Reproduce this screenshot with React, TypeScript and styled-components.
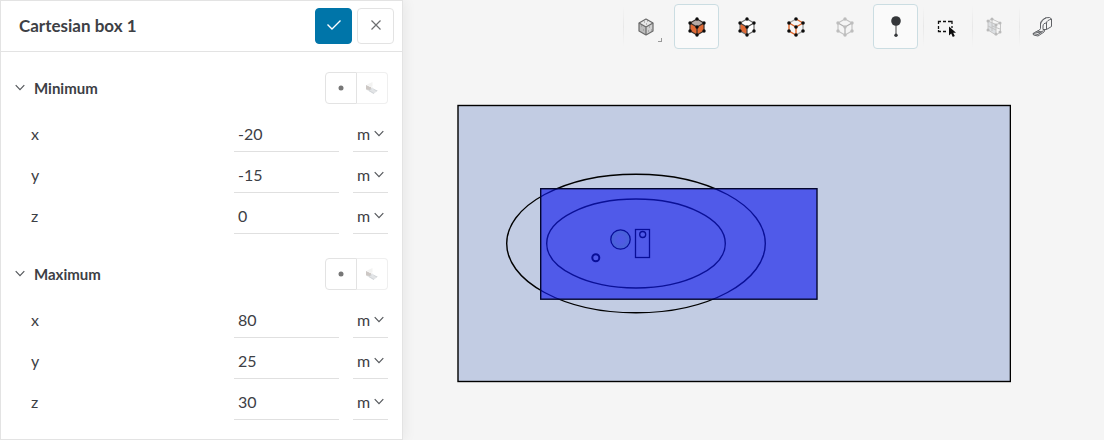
import React from "react";
import styled, { createGlobalStyle, css } from "styled-components";

const GlobalStyle = createGlobalStyle`
  *, *::before, *::after { box-sizing: border-box; }
  body {
    margin: 0;
    background: #f5f5f5;
    color: #3d4045;
    font-family: Lato, "Open Sans", sans-serif;
    font-size: 16px;
    line-height: 20px;
  }
  button, input, select { font: inherit; color: inherit; }
`;

const Page = styled.div`
  display: flex;
  align-items: stretch;
  min-height: 100vh;
`;

const Panel = styled.form`
  flex: 0 0 403px;
  background: #fff;
  border: 1px solid #e3e3e3;
  box-shadow: 2px 0 12px rgba(0, 0, 0, 0.06);
`;

const PanelHeader = styled.header`
  display: flex;
  align-items: center;
  gap: 5px;
  height: 51px;
  padding: 0 8px 0 18px;
  border-bottom: 1px solid #e3e3e3;
`;

const Title = styled.h1`
  flex: 1;
  margin: 0;
  font-size: 17px;
  font-weight: 700;
`;

const ActionButton = styled.button<{ $primary?: boolean }>`
  display: flex;
  align-items: center;
  justify-content: center;
  width: 37px;
  height: 36px;
  padding: 0 0 3px;
  border: 1px solid ${(p) => (p.$primary ? "#0075a9" : "#e3e3e3")};
  border-radius: 4px;
  background: ${(p) => (p.$primary ? "#0075a9" : "#fff")};
`;

const PanelBody = styled.div`
  display: flex;
  flex-direction: column;
  gap: 24px;
  padding: 20px 14px 18px;
`;

const Section = styled.section`
  display: flex;
  flex-direction: column;
  gap: 6px;
`;

const SectionHeader = styled.div`
  display: flex;
  align-items: center;
  height: 32px;
  margin-bottom: 7px;
`;

const Toggle = styled.button`
  display: flex;
  align-items: center;
  gap: 9px;
  padding: 0;
  border: 0;
  background: none;
  font-size: 15px;
  font-weight: 700;
`;

const Segmented = styled.div`
  display: flex;
  margin-left: auto;
`;

const Segment = styled.button<{ $muted?: boolean }>`
  display: flex;
  align-items: center;
  justify-content: center;
  width: 32px;
  height: 32px;
  padding: 0;
  border: 1px solid #e3e3e3;
  border-radius: 4px 0 0 4px;
  background: #fff;
  ${(p) =>
    p.$muted &&
    css`
      width: 31px;
      border-color: #efefef;
      border-left: 0;
      border-radius: 0 4px 4px 0;
    `}
`;

const FieldRow = styled.div`
  display: flex;
  align-items: stretch;
  gap: 14px;
  height: 35px;
  padding-left: 16px;
`;

const FieldLabel = styled.label`
  flex: 1;
  line-height: 34px;
`;

const NumberInput = styled.input`
  width: 105px;
  padding: 0 4px;
  border: 0;
  border-bottom: 1px solid #e0e0e0;
  border-radius: 0;
  background: transparent;
`;

const UnitBox = styled.div`
  display: flex;
  align-items: center;
  width: 35px;
  border-bottom: 1px solid #e0e0e0;
`;

const UnitSelect = styled.select`
  width: 35px;
  height: 34px;
  margin-right: -14px;
  padding: 0 0 0 4px;
  border: 0;
  background: transparent;
  appearance: none;
`;

const UnitArrow = styled.span`
  display: flex;
  pointer-events: none;
`;

const Viewer = styled.main`
  flex: 1;
  min-width: 0;
  display: flex;
  flex-direction: column;
`;

const Toolbar = styled.div`
  display: flex;
  justify-content: flex-end;
  gap: 5px;
  padding: 4px 40px 0 0;
`;

const ToolButton = styled.button<{ $active?: boolean; $divided?: boolean; $narrow?: boolean }>`
  position: relative;
  display: flex;
  align-items: center;
  justify-content: center;
  width: ${(p) => (p.$narrow ? 42 : 44)}px;
  height: 45px;
  padding: 0;
  border: 0;
  background: none;
  ${(p) =>
    p.$active &&
    css`
      width: 45px;
      margin: 0 1px;
      border: 1px solid #cbdde2;
      border-radius: 4px;
      background: #fafafa;
    `}
  ${(p) =>
    p.$divided &&
    css`
      &::before {
        content: "";
        position: absolute;
        left: -1px;
        top: 2px;
        bottom: 2px;
        width: 1px;
        background: linear-gradient(#f5f5f5, #e8e8e8 50%, #f5f5f5);
      }
    `}
`;

const MenuCorner = styled.span`
  position: absolute;
  right: 6px;
  bottom: 7px;
  width: 4px;
  height: 4px;
  border: solid #999;
  border-width: 0 1px 1px 0;
`;

const Stage = styled.div`
  padding: 55px 93px 0 54px;
`;

const Drawing = styled.svg`
  display: block;
  width: 100%;
  height: auto;
`;

const Chevron = () => (
  <svg width="10" height="10" viewBox="0 0 10 10" fill="none" stroke="#55585c" strokeWidth="1.2">
    <path d="M.7 2.2 5 6.6 9.3 2.2" />
  </svg>
);

const FaceIcon = () => (
  <svg width="14" height="14" viewBox="0 0 14 14">
    <path d="M1 4.5 7 8l6 1.500-4.500 3.500L2 9z" fill="#e2e4e6" />
    <path d="M1 4 6.500 6.500 5 9 1 8.500z" fill="#cdc8c5" />
    <path d="M2 3.500 7.500 1v4.500L5 6z" fill="#f3f3f2" />
    <path d="M5 9 7.500 7M4 9.500l5 3M7.500 7.500l4.500 2.500" stroke="#cdd1d4" strokeWidth=".8" fill="none" />
  </svg>
);

type CubeProps = {
  top?: string;
  left?: string;
  right?: string;
  line: string;
  innerLine?: string;
  nodes?: string;
  shaded?: boolean;
};

const cubeNodes = [
  [10, 2], [17, 6], [17, 14], [10, 18], [3, 14], [3, 6], [10, 10],
];

const Cube = ({ top = "none", left = "none", right = "none", line, innerLine, nodes, shaded }: CubeProps) => (
  <svg width="20" height="20" viewBox="0 0 20 20" strokeLinejoin="round">
    <path d="M10 2 17 6 10 10 3 6z" fill={top} />
    <path d="M3 6 10 10V18L3 14z" fill={left} />
    <path d="M17 6 10 10V18L17 14z" fill={right} />
    {shaded && (
      <path d="M8 5h1M11 4h1M10 7h1M5 9h1M7 13h1M13 10h1M15 13h1M12 14h1" stroke="#8a8a8a" />
    )}
    <path d="M10 2 17 6V14L10 18 3 14V6z" fill="none" stroke={line} strokeWidth="1.2" />
    <path d="M3 6 10 10 17 6M10 10V18" fill="none" stroke={innerLine ?? line} strokeWidth="1.2" />
    {nodes && cubeNodes.map(([x, y]) => <circle key={`${x}-${y}`} cx={x} cy={y} r="1.7" fill={nodes} />)}
  </svg>
);

const EdgeCube = () => (
  <svg width="20" height="20" viewBox="0 0 20 20" fill="none" strokeWidth="1.4">
    <path d="M10 2 3 6M17 6V14L10 18" stroke="#a3a3a3" />
    <path d="M10 2 17 6 10 10 3 6V14L10 18V10" stroke="#e0662a" />
    {cubeNodes.map(([x, y]) => <circle key={`${x}-${y}`} cx={x} cy={y} r="1.8" fill="#0c0c0c" />)}
  </svg>
);

const PinIcon = () => (
  <svg width="16" height="24" viewBox="0 0 16 24">
    <path d="M8 8v13" stroke="#777" strokeWidth="1.4" />
    <circle cx="8" cy="6" r="4.8" fill="#343639" />
    <circle cx="8" cy="20.2" r="1.7" fill="#343639" />
  </svg>
);

const BoxSelectIcon = () => (
  <svg width="20" height="20" viewBox="0 0 20 20">
    <path
      d="M2.5 7V4.5H5M7 4.5h3M12 4.5h4V7M2.5 9v3M2.5 13v1.5H5M7 14.5h3M16 9v2"
      fill="none"
      stroke="#111"
      strokeWidth="1.3"
    />
    <path d="M13 9.5v9l2.200-2 1.600 3.500 2-.9-1.600-3.300h3z" fill="#0c0c0c" />
  </svg>
);

const AssemblyIcon = () => (
  <svg width="18" height="20" viewBox="0 0 18 20" fill="none" stroke="#c4c4c4">
    <path d="M3 4 11 7.5V18L3 13z" fill="#dcdfe2" />
    <path d="M3 4 7 2 15.5 6 11 7.5M15.5 6V15L11 18M7 2v12M7 9l8 3M3 9l8 4" />
    {[[3, 4], [7, 2], [15, 6], [11, 8], [3, 13], [11, 17], [15, 15]].map(([x, y]) => (
      <circle key={`${x}-${y}`} cx={x} cy={y} r="1.5" fill="#bababa" stroke="none" />
    ))}
  </svg>
);

const TapeIcon = () => (
  <svg width="22" height="22" viewBox="0 0 22 22" fill="none" stroke="#606266" strokeLinejoin="round">
    <path d="M9.5 12.5V8C9.5 5 12 3 15 1.8L18.500 1.500 20.500 3V10.500L15.500 13.500H12" />
    <path d="M12 13.500V10C12 8 13.500 7 15.500 7V13.500M15.500 7C15.500 5 17.500 4 20.500 3M9.500 8C10 6 12 3.500 15 1.800" />
    <path d="M9.500 12.500 8.500 14 2 17.500 2.500 19 7 20 13 16 14 13.500M2 17.500 7 18.500 12.500 14.500M4.500 16 9.500 17M6.500 15 11 16" />
  </svg>
);

const bounds = [
  { name: "Minimum", values: { x: "-20", y: "-15", z: "0" } },
  { name: "Maximum", values: { x: "80", y: "25", z: "30" } },
];

const BoundSection = ({ name, values }: { name: string; values: Record<string, string> }) => (
  <Section>
    <SectionHeader>
      <Toggle type="button" aria-expanded="true">
        <Chevron />
        {name}
      </Toggle>
      <Segmented>
        <Segment type="button" aria-label={`${name} from point`}>
          <svg width="6" height="6" viewBox="0 0 6 6"><circle cx="3" cy="3" r="2.5" fill="#777" /></svg>
        </Segment>
        <Segment type="button" $muted aria-label={`${name} from face`}>
          <FaceIcon />
        </Segment>
      </Segmented>
    </SectionHeader>
    {Object.entries(values).map(([axis, value]) => {
      const id = `${name}-${axis}`;
      return (
        <FieldRow key={axis}>
          <FieldLabel htmlFor={id}>{axis}</FieldLabel>
          <NumberInput id={id} type="text" inputMode="decimal" defaultValue={value} />
          <UnitBox>
            <UnitSelect aria-label={`${name} ${axis} unit`} defaultValue="m">
              <option value="m">m</option>
            </UnitSelect>
            <UnitArrow><Chevron /></UnitArrow>
          </UnitBox>
        </FieldRow>
      );
    })}
  </Section>
);

const Scene = () => (
  <Drawing viewBox="457 104 554 279" role="img" aria-label="Top view of the domain with the Cartesian box">
    <defs>
      <radialGradient id="disc">
        <stop offset="0" stopColor="#5059e9" />
        <stop offset="0.45" stopColor="#4f5be2" />
        <stop offset="1" stopColor="#4664d2" />
      </radialGradient>
    </defs>
    <rect x="458" y="105.5" width="552.4" height="276" fill="#c2cce3" stroke="#000" strokeWidth="1.4" />
    <g fill="none" stroke="#000" strokeWidth="1.4">
      <ellipse cx="636" cy="243.5" rx="129.3" ry="69.3" />
      <ellipse cx="636" cy="243.5" rx="89.3" ry="44.5" />
    </g>
    <rect x="540.7" y="188.7" width="276.3" height="110.5" fill="#1019ec" fillOpacity="0.64" />
    <rect x="540.7" y="188.7" width="276.3" height="110.5" fill="none" stroke="#03062e" strokeWidth="1.4" />
    <g fill="none" stroke="#080e98" strokeWidth="1.3">
      <circle cx="620.5" cy="239.5" r="9.7" fill="url(#disc)" />
      <rect x="635.5" y="229.5" width="14" height="28" />
      <circle cx="642.7" cy="234.5" r="3" />
      <circle cx="595.8" cy="257.8" r="3.5" strokeWidth="2" />
    </g>
  </Drawing>
);

export default function App() {
  return (
    <>
      <GlobalStyle />
      <Page>
        <Panel onSubmit={(e) => e.preventDefault()}>
          <PanelHeader>
            <Title>Cartesian box 1</Title>
            <ActionButton type="submit" $primary aria-label="Apply">
              <svg width="16" height="14" viewBox="0 0 16 14" fill="none" stroke="#fff" strokeWidth="1.4">
                <path d="M1.5 6.5 6 11 14.5 2.5" />
              </svg>
            </ActionButton>
            <ActionButton type="button" aria-label="Cancel">
              <svg width="12" height="12" viewBox="0 0 12 12" fill="none" stroke="#6c6e70" strokeWidth="1.2">
                <path d="M1.5 1.5 10.5 10.5M10.5 1.5 1.5 10.5" />
              </svg>
            </ActionButton>
          </PanelHeader>
          <PanelBody>
            {bounds.map((b) => <BoundSection key={b.name} {...b} />)}
          </PanelBody>
        </Panel>
        <Viewer>
          <Toolbar role="toolbar" aria-label="Viewer tools">
            <ToolButton type="button" $divided aria-label="Render mode">
              <Cube top="#e8e8e8" left="#bcbcbc" right="#d0d0d0" line="#6a6a6a" shaded />
              <MenuCorner />
            </ToolButton>
            <ToolButton type="button" $active aria-label="Select volumes">
              <Cube top="#b5aaa6" left="#e06a35" right="#e06a35" line="#3a302c" nodes="#0c0c0c" />
            </ToolButton>
            <ToolButton type="button" aria-label="Select faces">
              <Cube top="#fff" left="#e06a35" right="#fff" line="#6d6d6d" innerLine="#444" nodes="#0c0c0c" />
            </ToolButton>
            <ToolButton type="button" aria-label="Select edges"><EdgeCube /></ToolButton>
            <ToolButton type="button" aria-label="Select vertices">
              <Cube line="#c4c4c4" innerLine="#b0b0b0" nodes="#bdbdbd" />
            </ToolButton>
            <ToolButton type="button" $active aria-label="Pick point"><PinIcon /></ToolButton>
            <ToolButton type="button" $divided aria-label="Box select"><BoxSelectIcon /></ToolButton>
            <ToolButton type="button" $divided $narrow aria-label="Select assembly"><AssemblyIcon /></ToolButton>
            <ToolButton type="button" $divided aria-label="Measure"><TapeIcon /></ToolButton>
          </Toolbar>
          <Stage>
            <Scene />
          </Stage>
        </Viewer>
      </Page>
    </>
  );
}
